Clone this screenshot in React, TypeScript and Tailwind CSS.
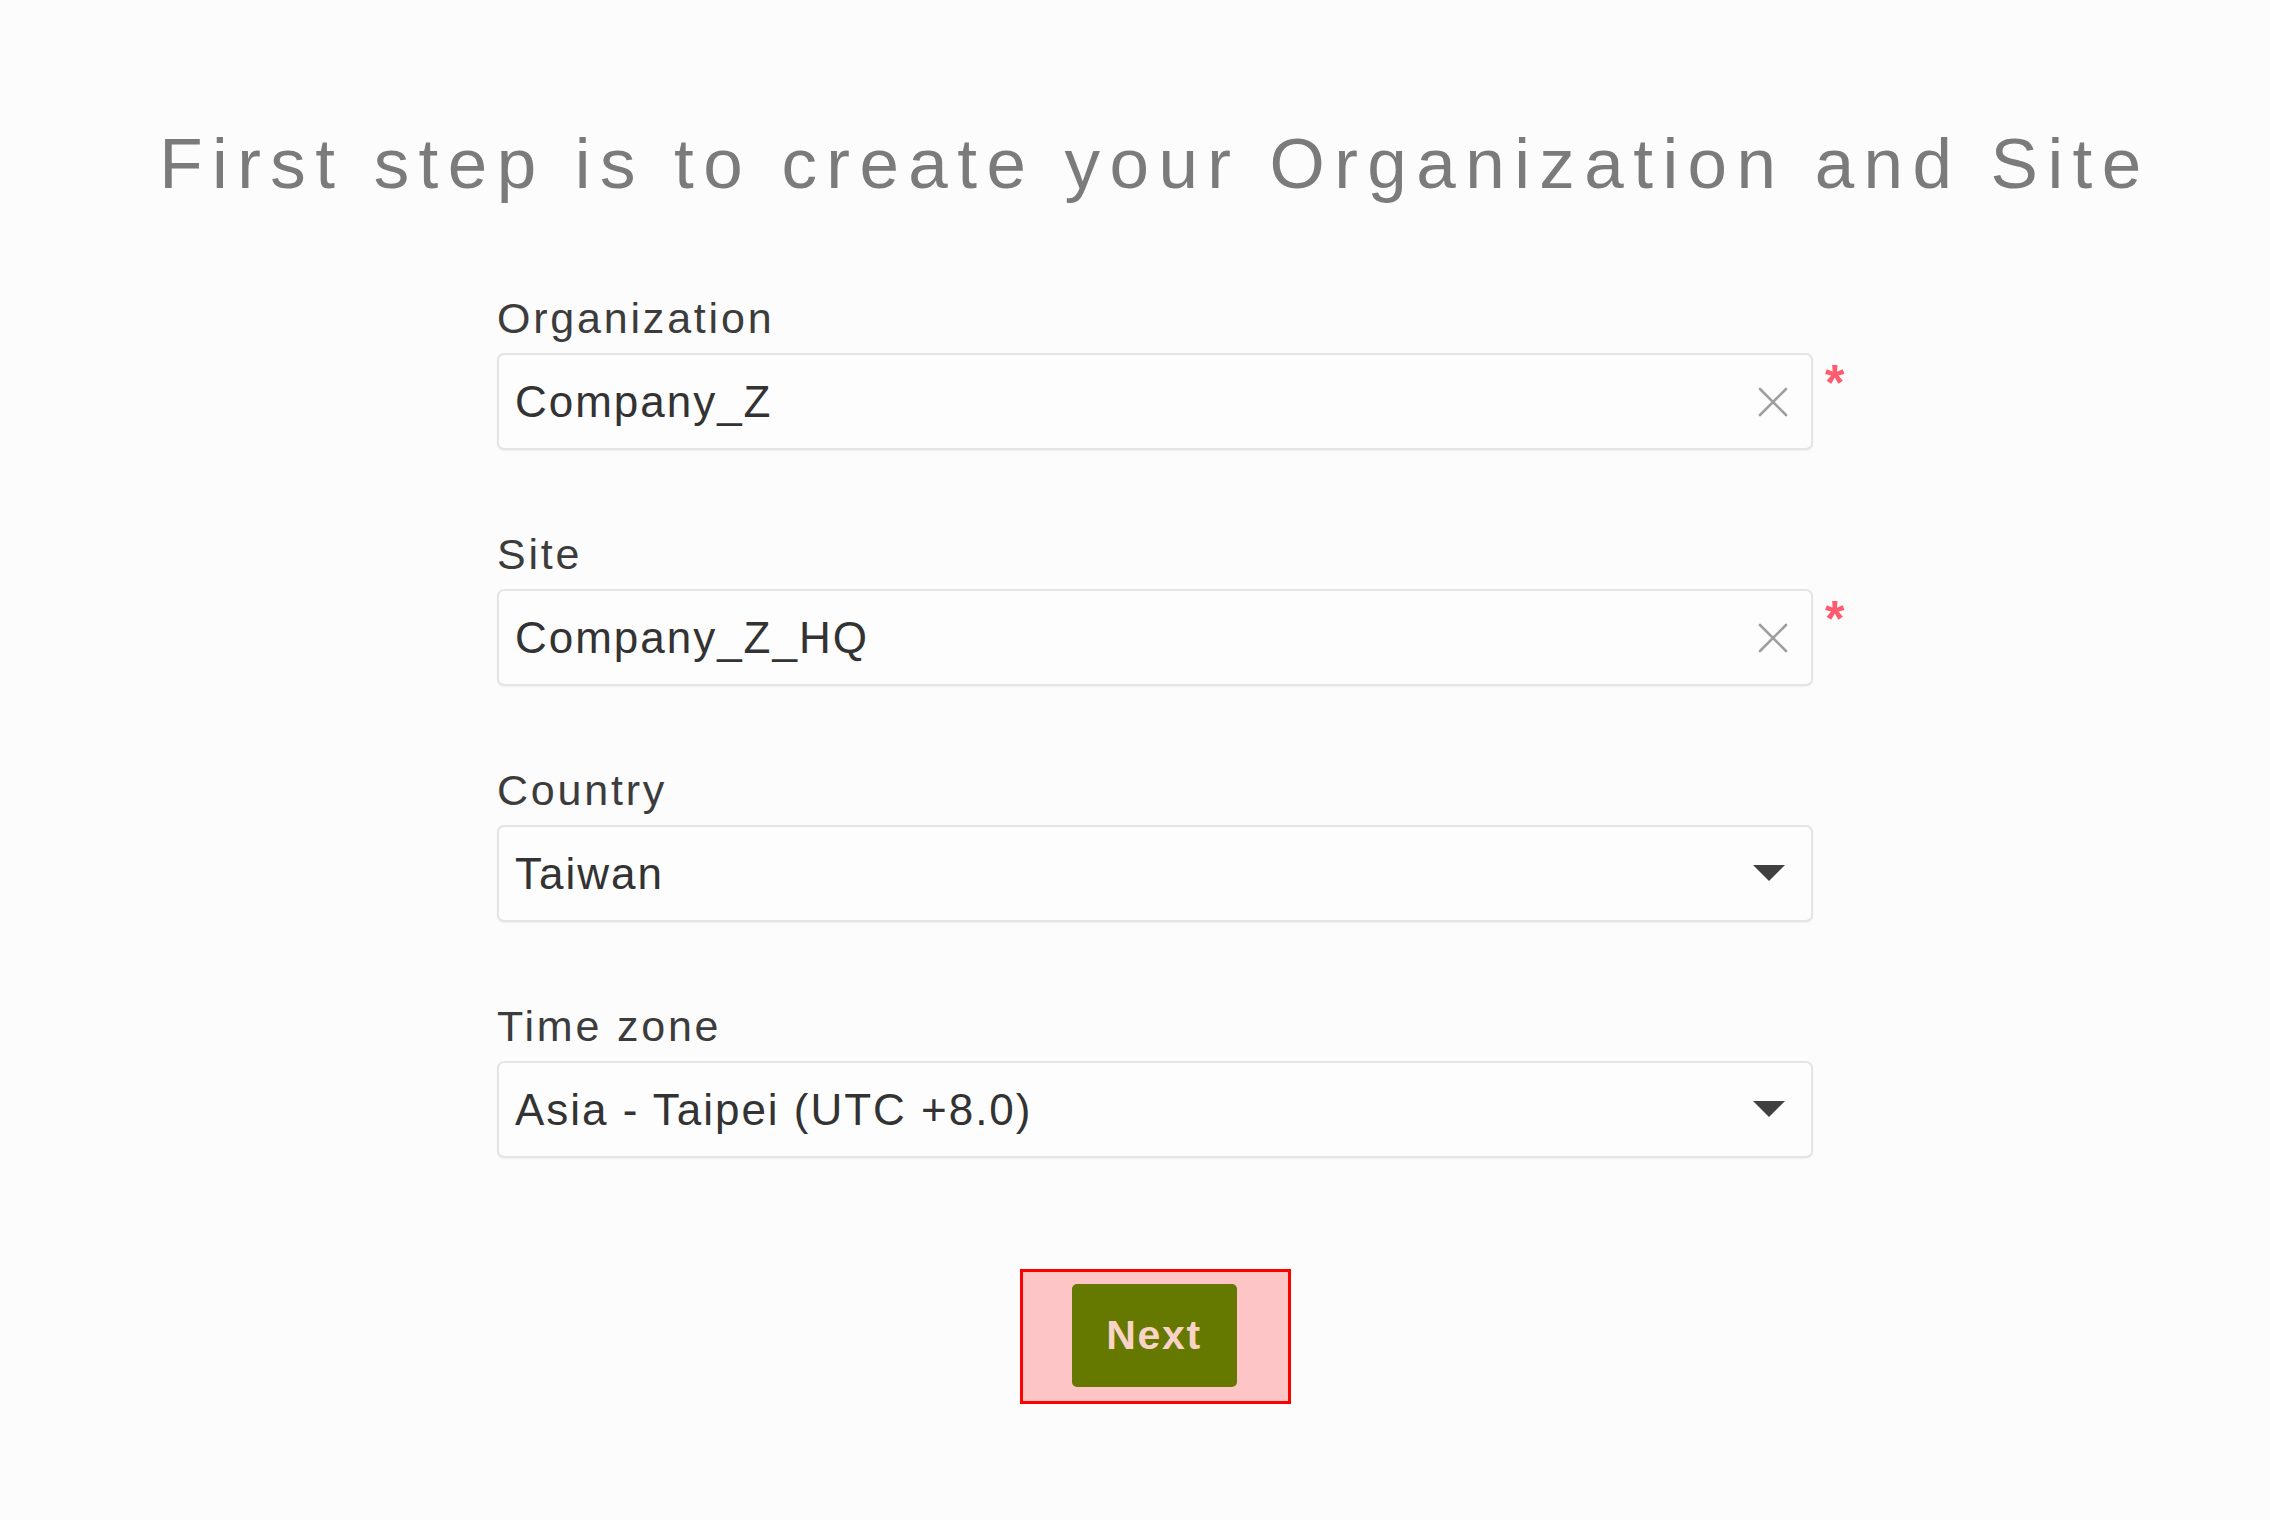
const FIELDS = [
  { label: "Organization", value: "Company_Z", kind: "text" as const, required: true },
  { label: "Site", value: "Company_Z_HQ", kind: "text" as const, required: true },
  { label: "Country", value: "Taiwan", kind: "select" as const, required: false },
  { label: "Time zone", value: "Asia - Taipei (UTC +8.0)", kind: "select" as const, required: false },
];

const font = { fontFamily: '"Liberation Sans", Arial, sans-serif' };

function Field({
  label,
  value,
  kind,
  required,
}: {
  label: string;
  value: string;
  kind: "text" | "select";
  required: boolean;
}) {
  return (
    <div className="flex flex-col">
      <label className="text-[43px] leading-[43px] tracking-[0.065em] text-[#3c3c3c]">{label}</label>
      <div className="relative mt-[13px]">
        <div className="flex h-[97px] items-center rounded-[7px] border-2 border-[#e4e4e4] bg-[#fdfdfd] pl-[16px] pr-[24px] shadow-[0_1px_2px_rgba(0,0,0,0.05)]">
          <span className="flex-1 text-[44px] leading-[44px] tracking-[0.045em] text-[#333]">{value}</span>
          {kind === "text" ? (
            <svg width="32" height="32" viewBox="0 0 32 32" className="-mr-[2px]">
              <path d="M3 3 L29 29 M29 3 L3 29" stroke="#9e9e9e" strokeWidth="2.6" strokeLinecap="round" />
            </svg>
          ) : (
            <svg width="32" height="17" viewBox="0 0 32 17" className="mr-[2px]">
              <polygon points="0,0 32,0 16,16" fill="#404040" />
            </svg>
          )}
        </div>
        {required && (
          <span className="absolute left-[calc(100%+12px)] top-[5px] text-[50px] font-bold leading-none text-[#ff5a6e]">*</span>
        )}
      </div>
    </div>
  );
}

export default function App() {
  return (
    <div className="min-h-screen w-full bg-[#fcfcfc] pl-[40px]" style={font}>
      <div className="flex flex-col items-center pt-[128px]">
        <h1 className="whitespace-nowrap text-[71px] font-normal leading-[71px] tracking-[0.133em] text-[#7b7b7b]">
          First step is to create your Organization and Site
        </h1>

        <div className="mt-[98px] flex w-[1316px] flex-col gap-[83px]">
          {FIELDS.map((f) => (
            <Field key={f.label} {...f} />
          ))}
        </div>

        <div className="mt-[111px] border-[3px] border-[#ff0000] bg-[#fdc5c5] pb-[14px] pl-[49px] pr-[51px] pt-[12px]">
          <button className="flex h-[103px] w-[165px] items-center justify-center rounded-[5px] bg-[#657800] text-[41px] font-bold tracking-[0.04em] text-[#f9d3c6]">
            Next
          </button>
        </div>
      </div>
    </div>
  );
}
